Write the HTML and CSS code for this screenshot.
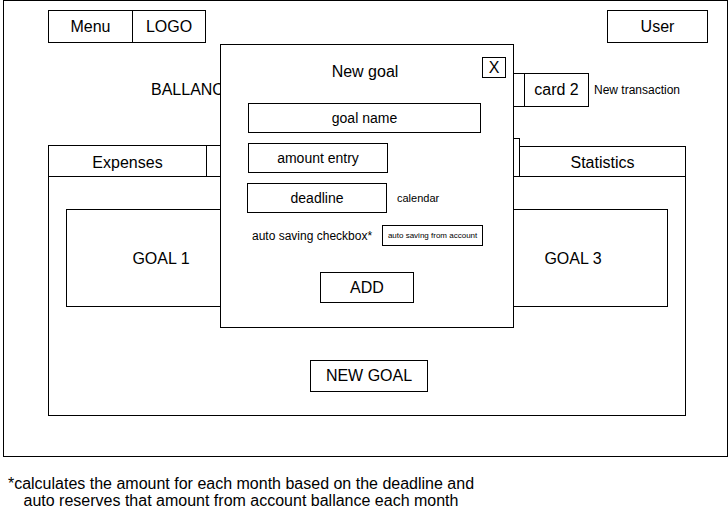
FILE: index.html
```html
<!DOCTYPE html>
<html lang="en">
    <head>
        <meta charset="UTF-8" />
        <meta name="viewport" content="width=device-width, initial-scale=1.0" />
        <title>New goal</title>
        <link rel="stylesheet" href="styles.css">
    </head>
    <body>
        <div class="frame">
            <header class="top">
                <div class="brand">
                    <div class="menu">Menu</div>
                    <div class="logo">LOGO</div>
                </div>
                <div class="user">User</div>
            </header>

            <div class="balance">
                <div class="balance-label">BALLANCE</div>
                <div class="card"></div>
                <div class="card">card 2</div>
                <div class="new-transaction">New transaction</div>
            </div>

            <nav class="tabs">
                <div class="tab tab-expenses">Expenses</div>
                <div class="tab tab-income"></div>
                <div class="tab tab-goals active"></div>
                <div class="tab tab-stats">Statistics</div>
            </nav>

            <main class="content">
                <div class="goals">
                    <div class="goal">GOAL 1</div>
                    <div class="goal"></div>
                    <div class="goal">GOAL 3</div>
                </div>
                <button type="button" class="new-goal">NEW GOAL</button>
            </main>

            <!-- popup over the goals page -->
            <div class="modal">
                <div class="modal-head">
                    <div class="modal-title">New goal</div>
                    <button type="button" class="close">X</button>
                </div>
                <div class="fields">
                    <div class="field field-name">goal name</div>
                    <div class="field field-amount">amount entry</div>
                    <div class="row">
                        <div class="field field-deadline">deadline</div>
                        <span class="hint">calendar</span>
                    </div>
                    <div class="row auto-row">
                        <span class="auto-label">auto saving checkbox*</span>
                        <div class="auto-box">auto saving from account</div>
                    </div>
                </div>
                <button type="button" class="add">ADD</button>
            </div>
        </div>

        <p class="note">
            *calculates the amount for each month based on the deadline and<br />
            auto reserves that amount from account ballance each month
        </p>
    </body>
</html>
```

FILE: styles.css
```css
* {
    margin: 0;
    padding: 0;
    box-sizing: border-box;
}
body {
    font-family: "Liberation Sans", Arial, sans-serif;
    color: #000;
    background: #fff;
}
button {
    font-family: inherit;
    color: inherit;
    background: #fff;
    border: 1px solid #000;
}
.frame {
    position: relative;
    margin-left: 3px;
    width: 725px;
    height: 457px;
    border: 1px solid #000;
}

/* header */
.top {
    display: flex;
    justify-content: space-between;
    padding: 9px 19px 0 44px;
}
.brand {
    display: flex;
    height: 33px;
    border: 1px solid #000;
}
.brand div {
    display: flex;
    align-items: center;
    justify-content: center;
    font-size: 16px;
}
.menu {
    width: 84px;
    border-right: 1px solid #000;
}
.logo {
    width: 72px;
}
.user {
    width: 101px;
    height: 33px;
    border: 1px solid #000;
    display: flex;
    align-items: center;
    justify-content: center;
    font-size: 16px;
}

/* balance row */
.balance {
    display: flex;
    align-items: center;
    margin-top: 30px;
    padding-left: 147px;
}
.balance-label {
    width: 309px;
    font-size: 16px;
}
.card {
    width: 65px;
    height: 34px;
    border: 1px solid #000;
    display: flex;
    align-items: center;
    justify-content: center;
    font-size: 16px;
}
.card + .card {
    margin-left: -1px;
}
.new-transaction {
    margin-left: 5px;
    font-size: 12px;
}

/* tabs */
.tabs {
    display: flex;
    align-items: flex-end;
    margin-top: 31px;
    padding-left: 44px;
}
.tab {
    height: 31px;
    border: 1px solid #000;
    border-bottom: none;
    padding-top: 3px;
    display: flex;
    align-items: center;
    justify-content: center;
    font-size: 16px;
}
.tab + .tab {
    margin-left: -1px;
}
.tab-expenses {
    width: 159px;
}
.tab-income {
    width: 157px;
}
.tab-goals {
    width: 158px;
}
.tab.active {
    height: 38px;
}
.tab-stats {
    width: 167px;
    height: 30px;
}

/* goals page */
.content {
    margin-left: 44px;
    width: 638px;
    height: 240px;
    border: 1px solid #000;
    padding-top: 32px;
    display: flex;
    flex-direction: column;
    align-items: center;
}
.goals {
    display: grid;
    grid-template-columns: repeat(3, 190px);
    gap: 16px;
}
.goal {
    height: 98px;
    border: 1px solid #000;
    padding-top: 2px;
    display: flex;
    align-items: center;
    justify-content: center;
    font-size: 16px;
}
.new-goal {
    margin-top: 53px;
    margin-left: 4px;
    width: 118px;
    height: 32px;
    font-size: 16px;
}

/* modal */
.modal {
    position: absolute;
    left: 216px;
    top: 43px;
    width: 294px;
    height: 284px;
    background: #fff;
    border: 1px solid #000;
    padding: 12px 7px 0;
    display: flex;
    flex-direction: column;
}
.modal-head {
    display: grid;
    grid-template-columns: 1fr auto 1fr;
    align-items: start;
}
.modal-title {
    grid-column: 2;
    padding-top: 6px;
    margin-left: -4px;
    font-size: 16px;
    line-height: 18px;
}
.close {
    grid-column: 3;
    justify-self: end;
    width: 24px;
    height: 21px;
    font-size: 16px;
    line-height: 18px;
}
.fields {
    display: flex;
    flex-direction: column;
    gap: 10px;
    margin-top: 22px;
    padding-left: 20px;
}
.field {
    height: 30px;
    border: 1px solid #000;
    display: flex;
    align-items: center;
    justify-content: center;
    font-size: 14px;
}
.field-name {
    width: 233px;
}
.field-amount {
    width: 140px;
}
.row {
    display: flex;
    align-items: center;
}
.field-deadline {
    width: 140px;
    margin-left: -1px;
}
.hint {
    margin-left: 10px;
    font-size: 11px;
}
.auto-row {
    margin-top: 2px;
}
.auto-label {
    margin-left: 4px;
    font-size: 12px;
}
.auto-box {
    margin-left: 10px;
    width: 101px;
    height: 21px;
    border: 1px solid #000;
    display: flex;
    align-items: center;
    justify-content: center;
    font-size: 8px;
    white-space: nowrap;
}
.add {
    align-self: center;
    margin-top: 26px;
    width: 94px;
    height: 31px;
    font-size: 16px;
}

/* footnote */
.note {
    width: 482px;
    margin-top: 18px;
    text-align: center;
    font-size: 16px;
    line-height: 17px;
}
```
